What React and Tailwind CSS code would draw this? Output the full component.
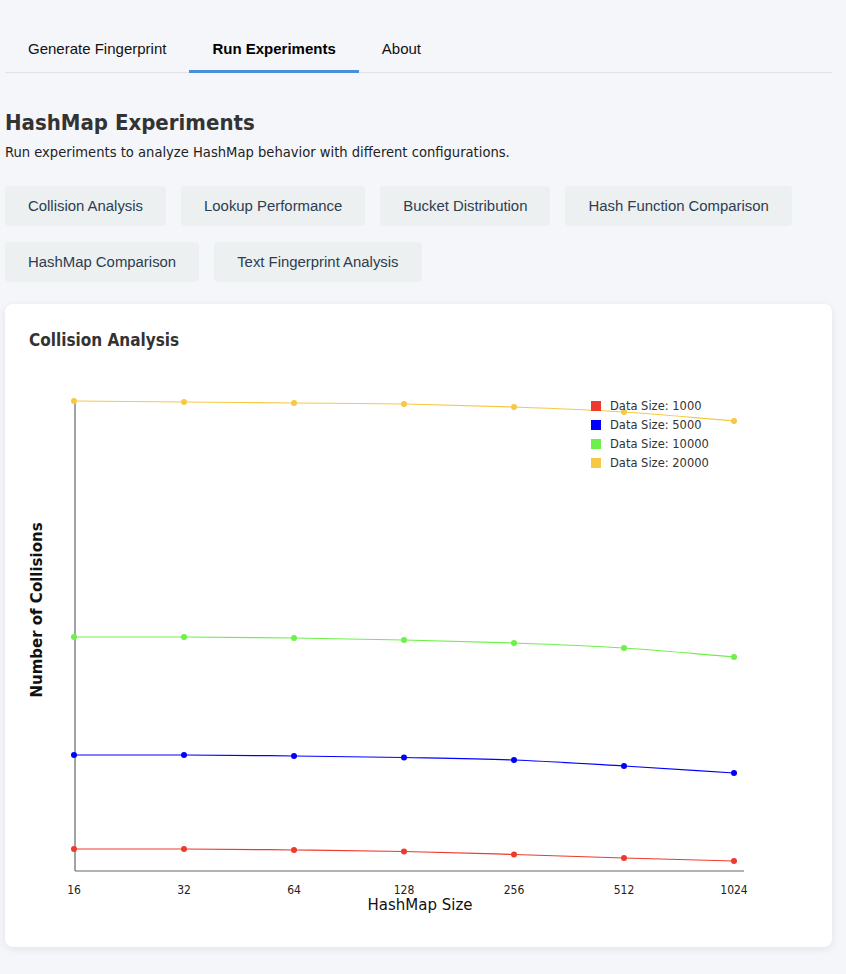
import { useState } from "react";

const tabs = ["Generate Fingerprint", "Run Experiments", "About"];
const experiments = [
  "Collision Analysis",
  "Lookup Performance",
  "Bucket Distribution",
  "Hash Function Comparison",
  "HashMap Comparison",
  "Text Fingerprint Analysis",
];

const sizes = [16, 32, 64, 128, 256, 512, 1024];
const xs = sizes.map((_, i) => 45 + 110 * i);

const series = [
  { label: "Data Size: 1000", color: "#ee3a2c", ys: [479, 479, 480, 481.5, 484.5, 488, 491] },
  { label: "Data Size: 5000", color: "#0000ff", ys: [385, 385, 386, 387.5, 390, 396, 403] },
  { label: "Data Size: 10000", color: "#6ef04a", ys: [267, 267, 268, 270, 273, 278, 287] },
  { label: "Data Size: 20000", color: "#f6c844", ys: [31, 32, 33, 34, 37, 42, 51] },
];

// monotone cubic, same idea as d3.curveMonotoneX
function monotonePath(px, py) {
  const n = px.length;
  const d = [];
  for (let i = 0; i < n - 1; i++) d.push((py[i + 1] - py[i]) / (px[i + 1] - px[i]));
  const m = [d[0]];
  for (let i = 1; i < n - 1; i++) m.push(d[i - 1] * d[i] <= 0 ? 0 : (d[i - 1] + d[i]) / 2);
  m.push(d[n - 2]);
  let s = `M${px[0]},${py[0]}`;
  for (let i = 0; i < n - 1; i++) {
    const h = (px[i + 1] - px[i]) / 3;
    s += ` C${px[i] + h},${py[i] + m[i] * h} ${px[i + 1] - h},${py[i + 1] - m[i + 1] * h} ${px[i + 1]},${py[i + 1]}`;
  }
  return s;
}

function Chart() {
  return (
    <svg width="779" height="553" className="block" style={{ fontFamily: "'DejaVu Sans Condensed', 'DejaVu Sans', sans-serif" }}>
      <line x1="46" y1="30" x2="46" y2="501" stroke="#666" strokeWidth="1.2" />
      <line x1="46" y1="501" x2="715" y2="501" stroke="#666" strokeWidth="1.2" />
      {sizes.map((s, i) => (
        <text key={s} x={xs[i]} y="524" fontSize="12" fill="#222" textAnchor="middle">
          {s}
        </text>
      ))}
      <text x="391" y="540" fontSize="15" fill="#111" textAnchor="middle" fontFamily="'DejaVu Sans', sans-serif">
        HashMap Size
      </text>
      <text
        x="0"
        y="0"
        fontSize="15"
        fontWeight="600"
        fill="#111"
        textAnchor="middle"
        fontFamily="'DejaVu Sans', sans-serif"
        transform="translate(13 240) rotate(-90)"
      >
        Number of Collisions
      </text>
      {series.map((sr) => (
        <g key={sr.label}>
          <path d={monotonePath(xs, sr.ys)} fill="none" stroke={sr.color} strokeWidth="1.2" />
          {sr.ys.map((y, i) => (
            <circle key={i} cx={xs[i]} cy={y} r="3" fill={sr.color} />
          ))}
        </g>
      ))}
      {series.map((sr, i) => (
        <g key={sr.label}>
          <rect x="562" y={31 + i * 19} width="10" height="10" fill={sr.color} />
          <text x="581" y={40 + i * 19} fontSize="11.5" fill="#333" fontFamily="'DejaVu Sans', sans-serif">
            {sr.label}
          </text>
        </g>
      ))}
    </svg>
  );
}

export default function App() {
  const [active, setActive] = useState(1);
  const [exp, setExp] = useState(0);

  return (
    <div className="min-h-[974px] bg-[#f5f6fa] px-[5px] pt-6 pb-6 text-[#333]">
      <div className="flex w-[827px] border-b border-[#dfe3e8]">
        {tabs.map((t, i) => (
          <button
            key={t}
            onClick={() => setActive(i)}
            className={`px-[23px] pt-[16px] pb-[12px] text-[15px] leading-[18px] border-b-[3px] -mb-px font-['Liberation_Sans',Arial,sans-serif] ${
              active === i ? "border-[#4a90d9] font-bold text-black" : "border-transparent text-[#111]"
            }`}
          >
            {t}
          </button>
        ))}
      </div>

      <h1 className="mt-[36px] text-[22px] leading-[28px] font-bold text-[#333] font-['DejaVu_Sans_Condensed','DejaVu_Sans',sans-serif]">
        HashMap Experiments
      </h1>
      <p className="mt-[5px] text-[14.6px] leading-[20px] text-[#222] font-['DejaVu_Sans_Condensed','DejaVu_Sans',sans-serif]">
        Run experiments to analyze HashMap behavior with different configurations.
      </p>

      <div className="mt-[24px] flex flex-wrap gap-x-[15px] gap-y-[16px] w-[827px]">
        {experiments.map((e, i) => (
          <button
            key={e}
            onClick={() => setExp(i)}
            className="h-[40px] px-[23px] rounded-[4px] bg-[#ecf0f1] text-[14.9px] text-[#2c3e50] font-['Liberation_Sans',Arial,sans-serif]"
          >
            {e}
          </button>
        ))}
      </div>

      <div className="mt-[22px] w-[827px] rounded-[8px] bg-white px-6 pt-6 pb-6 shadow-[0_2px_8px_rgba(0,0,0,0.08)]">
        <h2 className="text-[17px] leading-[24px] font-bold text-[#333] font-['DejaVu_Sans_Condensed','DejaVu_Sans',sans-serif]">
          {experiments[exp]}
        </h2>
        <div className="mt-[18px]">
          <Chart />
        </div>
      </div>
    </div>
  );
}
